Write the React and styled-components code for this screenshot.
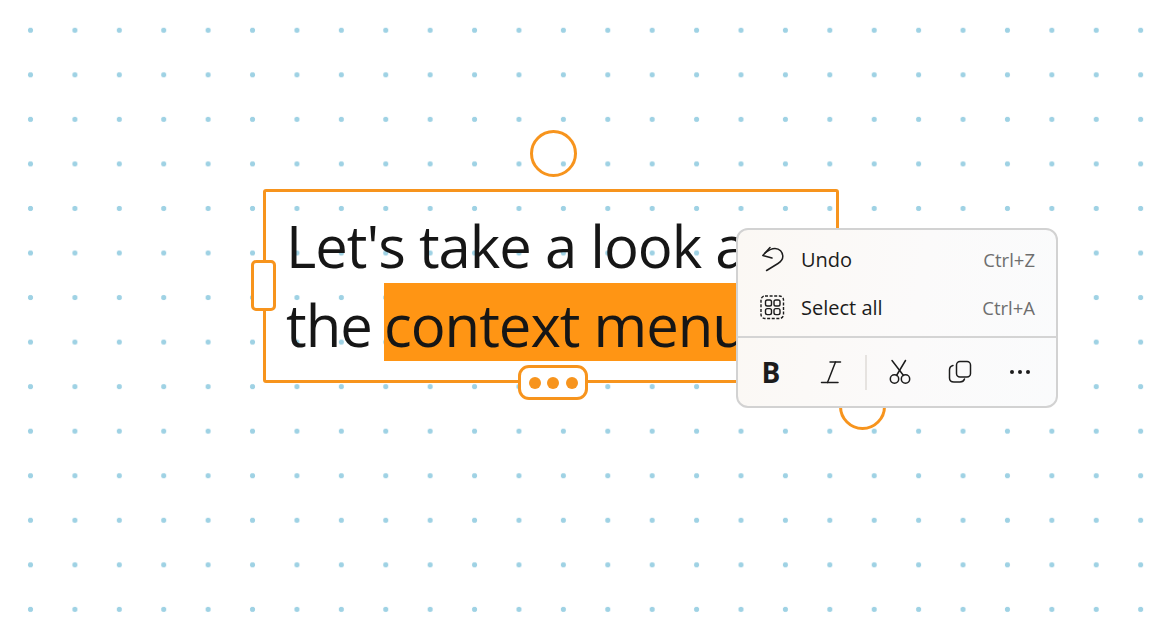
import React from 'react';
import styled, { createGlobalStyle } from 'styled-components';

const GlobalStyle = createGlobalStyle`
    html, body {
        margin: 0;
        padding: 0;
        background: #ffffff;
    }
`;

const UndoIcon = () => (
    <svg width="26" height="28" viewBox="0 0 26 28" fill="none" stroke="#1c1c1c" strokeWidth="1.5" strokeLinecap="round" strokeLinejoin="round">
        <path d="M10 1.5 L2.8 9.5 L12 12" />
        <path d="M5 7 C8 4.5 11.5 2.5 15 2.5 C19.5 2.5 22.8 6 22.8 10.6 C22.8 14 20.5 16 18 17.5 L6.6 24.5" />
    </svg>
);

const SelectAllIcon = () => (
    <svg width="26" height="26" viewBox="0 0 26 26" fill="none" stroke="#1c1c1c" strokeWidth="1.4">
        <rect x="1" y="1" width="22.5" height="22.5" rx="4" strokeDasharray="3 1.6" />
        <rect x="5.5" y="5" width="6" height="6" rx="1.8" />
        <rect x="14" y="5" width="6" height="6" rx="1.8" />
        <rect x="5.5" y="13.6" width="6" height="6" rx="1.8" />
        <rect x="14" y="13.6" width="6" height="6" rx="1.8" />
    </svg>
);

const ItalicIcon = () => (
    <svg width="22" height="24" viewBox="0 0 22 24" fill="none" stroke="#1c1c1c" strokeWidth="1.5" strokeLinecap="round">
        <path d="M10 2 H20.5" />
        <path d="M15.5 2 L7.5 22.5" />
        <path d="M1.5 22.5 H18" />
    </svg>
);

const CutIcon = () => (
    <svg width="24" height="26" viewBox="0 0 24 26" fill="none" stroke="#1c1c1c" strokeWidth="1.5" strokeLinecap="round">
        <circle cx="6.5" cy="20" r="4.2" />
        <circle cx="17.5" cy="20" r="4.2" />
        <path d="M8.5 16.5 L17.5 1.5" />
        <path d="M15.5 16.5 L4 1.5" />
    </svg>
);

const CopyIcon = () => (
    <svg width="24" height="24" viewBox="0 0 24 24" fill="none" stroke="#1c1c1c" strokeWidth="1.5" strokeLinecap="round">
        <rect x="8.5" y="1.5" width="14" height="15.5" rx="3.5" />
        <path d="M5 5.5 C3 6 1.5 7.5 1.5 10 V18 C1.5 20.5 3.5 22 6 22 H12 C14.5 22 16 20.5 16.5 19" />
    </svg>
);

const MoreIcon = () => (
    <svg width="22" height="6" viewBox="0 0 22 6" fill="#1c1c1c">
        <circle cx="3" cy="3" r="2" />
        <circle cx="11" cy="3" r="2" />
        <circle cx="19" cy="3" r="2" />
    </svg>
);

const App = () => {
    return (
        <Canvas>
            <GlobalStyle />
            <Frame>
                <RotateHandle />
                <SideHandle />
                <Line>Let's take a look at</Line>
                <Line>the <Highlight>context menu</Highlight></Line>
                <MoreHandle>
                    <HandleDot />
                    <HandleDot />
                    <HandleDot />
                </MoreHandle>
                <LowerHandle />
                <Menu>
                    <MenuList>
                        <MenuRow>
                            <RowIcon><UndoIcon /></RowIcon>
                            <RowLabel>Undo</RowLabel>
                            <Shortcut>Ctrl+Z</Shortcut>
                        </MenuRow>
                        <MenuRow>
                            <RowIcon><SelectAllIcon /></RowIcon>
                            <RowLabel>Select all</RowLabel>
                            <Shortcut>Ctrl+A</Shortcut>
                        </MenuRow>
                    </MenuList>
                    <Toolbar>
                        <ToolButton><BoldGlyph>B</BoldGlyph></ToolButton>
                        <ToolButton><ItalicIcon /></ToolButton>
                        <ToolDivider />
                        <ToolButton><CutIcon /></ToolButton>
                        <ToolButton><CopyIcon /></ToolButton>
                        <ToolButton><MoreIcon /></ToolButton>
                    </Toolbar>
                </Menu>
            </Frame>
        </Canvas>
    );
};

export default App;

// Styled Components
const Canvas = styled.div`
    box-sizing: border-box;
    width: 1160px;
    height: 628px;
    overflow: hidden;
    padding: 189px 0 0 263px;
    background-color: #ffffff;
    background-image: radial-gradient(circle, #9fd2e4 0, #9fd2e4 2.2px, rgba(159, 210, 228, 0) 3px);
    background-size: 44.42px 44.55px;
    background-position: 8.3px 8px;
`;

const Frame = styled.div`
    position: relative;
    box-sizing: border-box;
    width: 576px;
    height: 194px;
    padding: 12px 0 0 20px;
    border: 3px solid #f7941d;
    border-radius: 3px;
    font-family: "Open Sans", "Noto Sans", sans-serif;
    font-size: 58px;
    letter-spacing: -1px;
    line-height: 83px;
    color: #161616;
    white-space: nowrap;
`;

const Line = styled.div`
    height: 79px;
`;

const Highlight = styled.span`
    display: inline-block;
    height: 78px;
    margin-left: -2px;
    background: #ff9514;
`;

const RotateHandle = styled.div`
    position: absolute;
    left: 264px;
    top: -62px;
    box-sizing: border-box;
    width: 47px;
    height: 47px;
    border: 3px solid #f7941d;
    border-radius: 50%;
`;

const LowerHandle = styled(RotateHandle)`
    left: 573px;
    top: 191px;
`;

const SideHandle = styled.div`
    position: absolute;
    left: -15px;
    top: 68px;
    box-sizing: border-box;
    width: 25px;
    height: 51px;
    background: #ffffff;
    border: 3px solid #f7941d;
    border-radius: 5px;
`;

const MoreHandle = styled.div`
    position: absolute;
    left: 252px;
    top: 173px;
    box-sizing: border-box;
    width: 70px;
    height: 35px;
    display: flex;
    align-items: center;
    justify-content: center;
    gap: 6.5px;
    background: #ffffff;
    border: 3px solid #f7941d;
    border-radius: 11px;
`;

const HandleDot = styled.span`
    width: 12px;
    height: 12px;
    border-radius: 50%;
    background: #f7941d;
`;

const Menu = styled.div`
    position: absolute;
    left: 470px;
    top: 36px;
    box-sizing: border-box;
    width: 322px;
    height: 180px;
    display: flex;
    flex-direction: column;
    background: linear-gradient(100deg, #fbf8f4 0%, #fbfafa 55%, #fafbfc 100%);
    border: 2px solid #d2d2d2;
    border-radius: 12px;
    font-family: "Open Sans", "Noto Sans", sans-serif;
    letter-spacing: 0;
    color: #1c1c1c;
`;

const MenuList = styled.div`
    height: 108px;
    padding: 6px 0 4px;
    box-sizing: border-box;
    border-bottom: 2px solid #d4d4d4;
`;

const MenuRow = styled.div`
    display: flex;
    align-items: center;
    height: 48px;
    padding: 0 21px 0 22px;
`;

const RowIcon = styled.span`
    display: flex;
    align-items: center;
    justify-content: center;
    width: 26px;
    margin-right: 15px;
`;

const RowLabel = styled.span`
    flex: 1;
    font-size: 20px;
    line-height: 28px;
`;

const Shortcut = styled.span`
    font-size: 18.5px;
    line-height: 28px;
    color: #6e6e6e;
`;

const Toolbar = styled.div`
    flex: 1;
    display: flex;
    align-items: center;
    padding-left: 3px;
`;

const ToolButton = styled.div`
    display: flex;
    align-items: center;
    justify-content: center;
    width: 60px;
    height: 60px;
`;

const ToolDivider = styled.div`
    width: 2px;
    height: 35px;
    margin: 0 3px 0 4px;
    background: #e6e3e0;
`;

const BoldGlyph = styled.span`
    font-size: 28px;
    font-weight: 700;
    line-height: 1;
    color: #1c1c1c;
`;
